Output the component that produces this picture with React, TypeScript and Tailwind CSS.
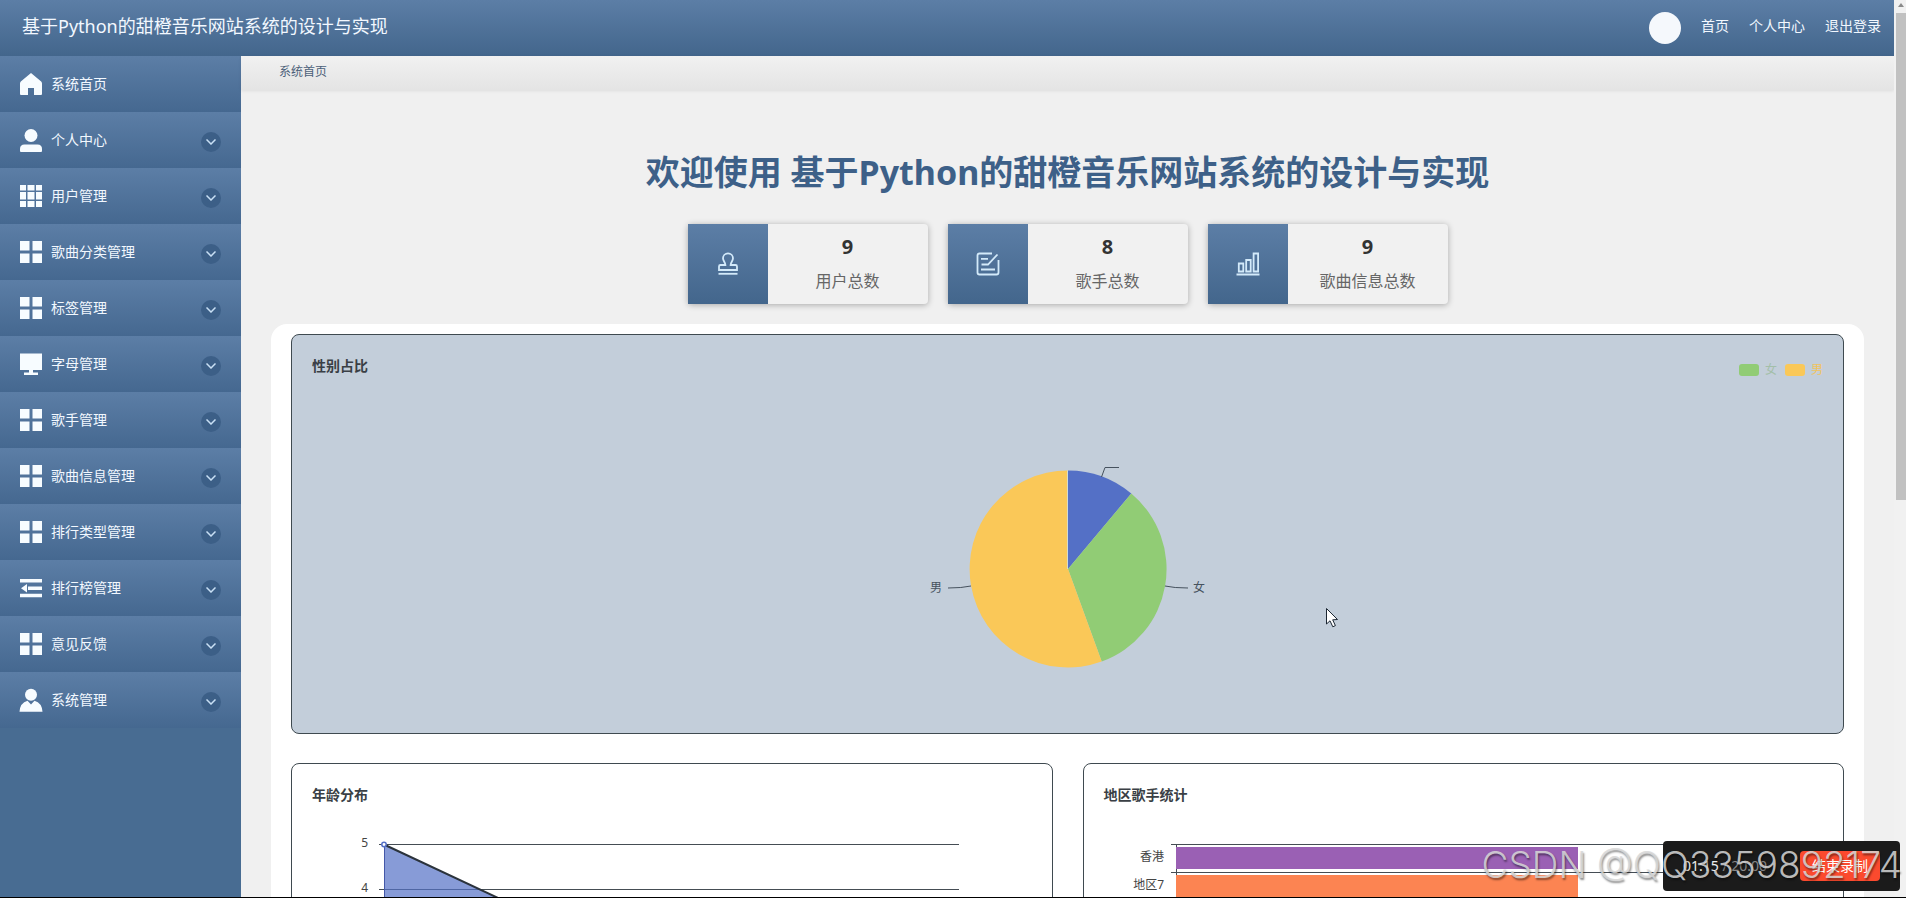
import type { ReactNode } from 'react';

const SYSTEM_NAME = '基于Python的甜橙音乐网站系统的设计与实现';

type IconName = 'home' | 'user' | 'grid9' | 'grid4' | 'monitor' | 'outdent' | 'custom';

const ICONS: Record<IconName, ReactNode> = {
  home: <path d="M11 0 L0.8 8.6 Q0 9.4 0 10.5 V21 Q0 22 1 22 H8 V15 H14 V22 H21 Q22 22 22 21 V10.5 Q22 9.4 21.2 8.6 Z" />,
  user: (
    <>
      <circle cx="11" cy="6.5" r="6.5" />
      <path d="M0 22 V20 Q0 15.5 4.5 15.5 H17.5 Q22 15.5 22 20 V22 Q22 23 21 23 H1 Q0 23 0 22 Z" />
    </>
  ),
  grid9: <path d="M0 0h6v5.5H0z M7.5 0h7v5.5h-7z M16 0h6v5.5h-6z M0 7h6v7.5H0z M7.5 7h7v7.5h-7z M16 7h6v7.5h-6z M0 16h6V22H0z M7.5 16h7V22h-7z M16 16h6V22h-6z" />,
  grid4: <path d="M0 0h9.5v9.5H0z M12.5 0H22v9.5h-9.5z M0 12.5h9.5V22H0z M12.5 12.5H22V22h-9.5z" />,
  monitor: <path d="M0 0.5h22v16.5H0z M9 17h4v2.5h5V22H4v-2.5h5z" />,
  outdent: <path d="M0 2h22v3.4H0z M8 9.5h14v3.4H8z M7 7v8.4L1 11.2z M0 16.8h22v3.4H0z" />,
  custom: (
    <>
      <circle cx="11" cy="5.8" r="6" />
      <path d="M-0.5 22.8 Q0 14 7.5 11.8 L11 15.5 L14.5 11.8 Q22 14 22.5 22.8 Z" />
    </>
  ),
};

const MENU: { label: string; icon: IconName; expandable: boolean }[] = [
  { label: '系统首页', icon: 'home', expandable: false },
  { label: '个人中心', icon: 'user', expandable: true },
  { label: '用户管理', icon: 'grid9', expandable: true },
  { label: '歌曲分类管理', icon: 'grid4', expandable: true },
  { label: '标签管理', icon: 'grid4', expandable: true },
  { label: '字母管理', icon: 'monitor', expandable: true },
  { label: '歌手管理', icon: 'grid4', expandable: true },
  { label: '歌曲信息管理', icon: 'grid4', expandable: true },
  { label: '排行类型管理', icon: 'grid4', expandable: true },
  { label: '排行榜管理', icon: 'outdent', expandable: true },
  { label: '意见反馈', icon: 'grid4', expandable: true },
  { label: '系统管理', icon: 'custom', expandable: true },
];

const STATS: { value: number; label: string; icon: ReactNode }[] = [
  {
    value: 9,
    label: '用户总数',
    icon: (
      <>
        <path d="M9.4 13 C9.4 10.5 7 9 7 6.3 A5 5 0 0 1 17 6.3 C17 9 14.6 10.5 14.6 13 H19.5 Q21 13 21 14.5 V18 H3 V14.5 Q3 13 4.5 13 Z" />
        <path d="M2.5 21.8 H21.5" />
      </>
    ),
  },
  {
    value: 8,
    label: '歌手总数',
    icon: (
      <>
        <path d="M16 1.5 H3.5 Q1.5 1.5 1.5 3.5 V20.5 Q1.5 22.5 3.5 22.5 H20.5 Q22.5 22.5 22.5 20.5 V8" />
        <path d="M21.5 2.5 L12 12.5 H5.5 M5 6.8 H12 M5 17.5 H19" />
      </>
    ),
  },
  {
    value: 9,
    label: '歌曲信息总数',
    icon: <path d="M2.8 11.5 h4.5 v8 h-4.5 z M10.2 8 h4.5 v11.5 h-4.5 z M17.6 1.5 h4.5 v18 h-4.5 z M0.5 22.5 H23.5" />,
  },
];

function Header() {
  return (
    <header className="flex h-14 items-center justify-between bg-linear-to-b from-[#5c7ea6] to-[#43668c] pl-[22px] pr-[13px] text-[#f2f8ff]">
      <div className="pb-1 text-lg leading-6">{SYSTEM_NAME}</div>
      <nav className="flex items-center gap-5 text-sm leading-5">
        <span className="size-8 rounded-full bg-[#f5f8fc]" />
        <a href="#home" className="pb-1">首页</a>
        <a href="#profile" className="pb-1">个人中心</a>
        <a href="#logout" className="pb-1">退出登录</a>
      </nav>
    </header>
  );
}

function Sidebar() {
  return (
    <aside className="w-[241px] shrink-0 bg-[#486c92]">
      <ul>
        {MENU.map((item) => (
          <li key={item.label}>
            <a
              href={`#${item.label}`}
              className="flex h-14 items-center bg-linear-to-b from-[#5c7ea6] to-[#456890] pl-5 pr-5 text-sm text-[#f2f8ff]"
            >
              <svg viewBox="0 0 22 23" className="h-[23px] w-[22px] overflow-visible fill-[#f7fcff]">
                {ICONS[item.icon]}
              </svg>
              <span className="ml-[9px] flex-1">{item.label}</span>
              {item.expandable && (
                <span className="mt-1 flex size-5 items-center justify-center rounded-full bg-[#3c5f87]">
                  <svg viewBox="0 0 10 6" className="h-1.5 w-2.5 fill-none stroke-[#c9e0f5]" strokeWidth="1.5">
                    <path d="M0.5 0.5 L5 5 L9.5 0.5" />
                  </svg>
                </span>
              )}
            </a>
          </li>
        ))}
      </ul>
    </aside>
  );
}

function StatCard({ value, label, icon }: { value: number; label: string; icon: ReactNode }) {
  return (
    <div className="flex h-20 w-60 rounded bg-[#f1f1f1] shadow-[0_1px_6px_rgba(0,0,0,0.3)]">
      <div className="flex w-20 items-center justify-center bg-linear-to-b from-[#5c7ea6] to-[#43668c]">
        <svg viewBox="0 0 24 24" className="size-6 fill-none stroke-[#d3eafa]" strokeWidth="1.8">
          {icon}
        </svg>
      </div>
      <div className="flex flex-1 flex-col items-center gap-2 pt-[9px]">
        <div className="text-xl leading-7 font-bold text-[#333]">{value}</div>
        <div className="text-base leading-6 text-[#666]">{label}</div>
      </div>
    </div>
  );
}

function ChartCard({ title, legend, className, children }: { title: string; legend?: ReactNode; className: string; children: ReactNode }) {
  return (
    <section className={`h-[400px] overflow-hidden rounded-lg border border-[#3f4a50] p-5 ${className}`}>
      <div className="flex h-[22px] justify-between">
        <h2 className="text-sm leading-[22px] font-bold text-[#3a3f45]">{title}</h2>
        {legend}
      </div>
      {children}
    </section>
  );
}

function GenderLegend() {
  return (
    <div className="flex items-center gap-2 pt-2 text-xs leading-4">
      <span className="flex items-center gap-1.5">
        <i className="h-3 w-5 rounded-[3px] bg-[#91cc75]" />
        <span className="text-[#a3bfa9]">女</span>
      </span>
      <span className="flex items-center gap-1.5">
        <i className="h-3 w-5 rounded-[3px] bg-[#fac858]" />
        <span className="text-[#f0c45f]">男</span>
      </span>
    </div>
  );
}

function GenderPie() {
  return (
    <svg viewBox="0 0 300 336" className="mx-auto h-[336px] w-[300px] text-xs">
      <path d="M150 192 V93.5 A98.5 98.5 0 0 1 213.3 116.5 Z" fill="#5470c6" />
      <path d="M150 192 L213.3 116.5 A98.5 98.5 0 0 1 183.7 284.6 Z" fill="#91cc75" />
      <path d="M150 192 L183.7 284.6 A98.5 98.5 0 1 1 150 93.5 Z" fill="#fac858" />
      <path d="M149.5 192 V93.5" stroke="#d5dccb" />
      <g fill="none" stroke="#46525e">
        <path d="M183.5 100 L187 90.5 H201" />
        <path d="M247 209 Q256 211 270 211" />
        <path d="M53 209 Q44 211 30 211" />
      </g>
      <text x="275" y="215" fill="#46525e">女</text>
      <text x="12" y="215" fill="#46525e">男</text>
    </svg>
  );
}

function AgeChart() {
  const rows = [5, 4];
  return (
    <svg viewBox="0 0 720 336" preserveAspectRatio="xMinYMin slice" className="h-[336px] w-[720px] text-xs">
      {rows.map((n, i) => (
        <g key={n}>
          <path d={`M67 ${38.5 + i * 45} H647`} stroke="#454d54" />
          <text x="56" y={41 + i * 45} textAnchor="end" fill="#444">{n}</text>
        </g>
      ))}
      <path d="M72 38.5 L360 173.5 L647 218.5 V263.5 H72 Z" fill="#5470c6" fillOpacity="0.7" />
      <path d="M72.5 38.5 V263.5" stroke="#4458a8" />
      <path d="M72 38.5 L360 173.5 L647 218.5" fill="none" stroke="#2b333c" strokeWidth="2" />
      <circle cx="72" cy="38.5" r="2.2" fill="#fff" stroke="#5470c6" strokeWidth="1.5" />
    </svg>
  );
}

function RegionChart() {
  const bars = [
    { label: '香港', width: 402, color: '#9a60b4' },
    { label: '地区7', width: 402, color: '#fc8452' },
  ];
  return (
    <svg viewBox="0 0 720 336" preserveAspectRatio="xMinYMin slice" className="h-[336px] w-[720px] text-xs">
      <path d="M72.5 38 V263" stroke="#454d54" />
      {bars.map((bar, i) => (
        <g key={bar.label}>
          <path d={`M67 ${38.5 + i * 28} H647`} stroke="#454d54" />
          <rect x="72" y={41 + i * 28} width={bar.width} height="22" fill={bar.color} />
          <text x="60" y={55 + i * 28} textAnchor="end" fill="#444">{bar.label}</text>
        </g>
      ))}
    </svg>
  );
}

function Recorder() {
  return (
    <div className="absolute right-1.5 bottom-1.5 flex h-[50px] w-[237px] items-center justify-between rounded bg-[#1b1b1b] pr-5 pl-5">
      <div className="text-sm text-[#eee]">
        01:15 <span className="text-[#888]">/ 20:00</span>
      </div>
      <button className="h-[30px] w-20 rounded bg-[#fb4a2e] text-sm text-white">结束录制</button>
    </div>
  );
}

function Scrollbar() {
  return (
    <div className="flex w-3 shrink-0 flex-col items-end bg-[#f1f1f1]">
      <svg viewBox="0 0 10 13" className="h-[13px] w-2.5 fill-[#8a8a8a]">
        <path d="M5 3 L8 7 H2 Z" />
      </svg>
      <div className="h-[487px] w-2.5 bg-[#c1c1c1]" />
    </div>
  );
}

export default function App() {
  return (
    <div className="relative flex h-screen overflow-hidden border-b border-black bg-[#f0f0f0] font-['Noto_Sans','Noto_Sans_CJK_SC',sans-serif]">
      <div className="flex min-w-0 flex-1 flex-col">
        <Header />
        <div className="flex min-h-0 flex-1">
          <Sidebar />
          <main className="min-w-0 flex-1">
            <div className="h-[34px] bg-linear-to-b from-[#f1f1f1] to-[#e4e4e4] pt-1.5 pl-[38px] text-xs leading-5 text-[#4b6079] shadow-[0_1px_3px_rgba(0,0,0,0.08)]">
              系统首页
            </div>
            <div className="px-[30px] pt-[58px]">
              <h1 className="text-center text-[34px] leading-[48px] font-bold text-[#3d6088]">欢迎使用 {SYSTEM_NAME}</h1>
              <div className="mt-7 flex flex-wrap justify-center gap-5">
                {STATS.map((stat) => (
                  <StatCard key={stat.label} value={stat.value} label={stat.label} icon={stat.icon} />
                ))}
              </div>
              <div className="mt-5 rounded-2xl bg-white px-5 py-2.5">
                <ChartCard title="性别占比" legend={<GenderLegend />} className="bg-[#c3ceda]">
                  <GenderPie />
                </ChartCard>
                <div className="mt-[29px] grid grid-cols-1 gap-[30px] lg:grid-cols-2">
                  <ChartCard title="年龄分布" className="bg-white">
                    <AgeChart />
                  </ChartCard>
                  <ChartCard title="地区歌手统计" className="bg-white">
                    <RegionChart />
                  </ChartCard>
                </div>
              </div>
            </div>
          </main>
        </div>
      </div>
      <Scrollbar />
      <Recorder />
      <div className="pointer-events-none absolute right-1 bottom-1 font-[Inter] text-[37px] leading-[56px] font-light text-[#d8d8d8]/85 [text-shadow:1px_2px_2px_rgba(0,0,0,0.45)]">
        CSDN @QQ3359892174
      </div>
      <svg viewBox="0 0 12 20" className="absolute top-[608px] left-[1326px] h-5 w-3 fill-white stroke-[#1c2733]" strokeWidth="1">
        <path d="M0.5 0.5 V16 L4 12.8 L6.8 18.8 L9.4 17.6 L6.7 11.8 L11.5 11.5 Z" />
      </svg>
    </div>
  );
}
